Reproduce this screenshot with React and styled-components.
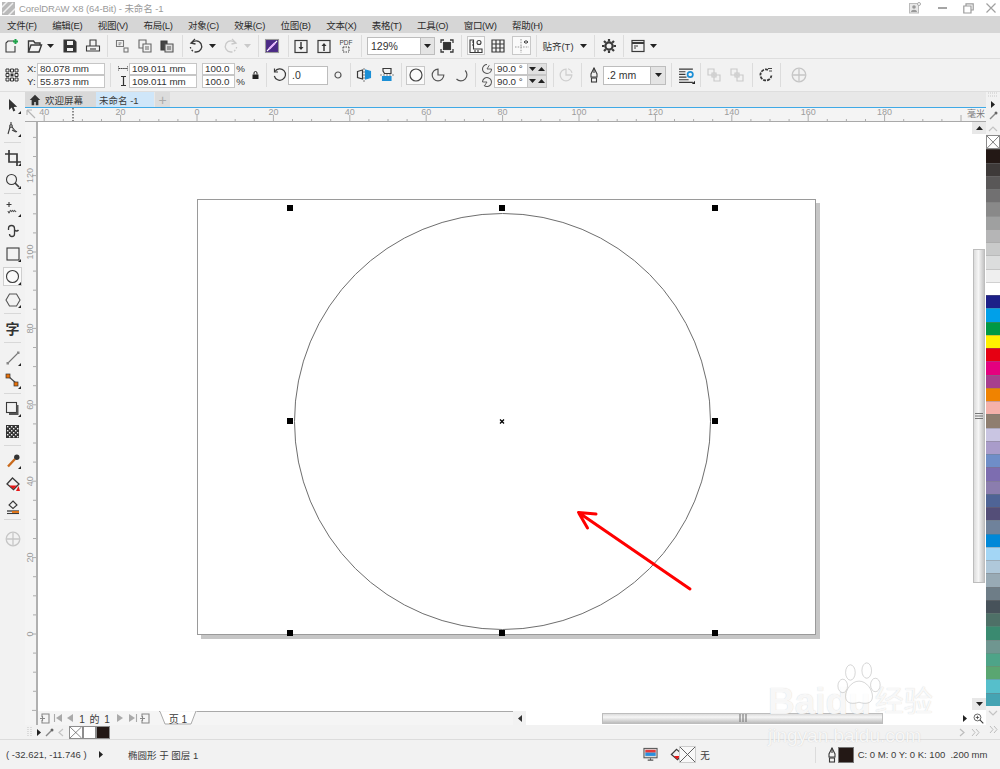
import React from 'react';
import styled, { createGlobalStyle } from 'styled-components';

const FONT = '"Liberation Sans", "Noto Sans CJK SC", sans-serif';
const Global = createGlobalStyle`
  html, body { margin: 0; padding: 0; background: #f2f2f2; }
  body { font-family: ${FONT}; color: #333; }
`;

const App_ = styled.div`position: relative; width: 1000px; height: 769px; overflow: hidden; display: flex; flex-direction: column; background: #f2f2f2;`;
const TitleBar = styled.div`height: 16px; background: #fff; display: flex; align-items: center; color: #9a9a9a; font-size: 9.5px; flex: none;`;
const TitleText = styled.span`margin-left: 4px; letter-spacing: -.1px;`;
const WindowButtons = styled.div`margin-left: auto; display: flex; align-items: center;`;
const MenuBar = styled.div`height: 17px; flex: none; background: #d6d6d6; display: flex; align-items: center; padding-left: 7px; gap: 15.5px; font-size: 9.5px; letter-spacing: -.3px; color: #2c2c2c;`;
const Bar = styled.div`flex: none; display: flex; align-items: center; background: #f2f2f2; height: ${p => p.$h}px; border-bottom: 1px solid #dedede; box-sizing: border-box;`;
const Slot = styled.span`flex: none; display: flex; align-items: center; justify-content: center; width: ${p => p.$w || 14}px; margin-left: ${p => p.$ml || 0}px;`;
const Sep = styled.span`flex: none; width: 1px; height: ${p => p.$h || 22}px; background: #dcdcdc; margin-left: ${p => p.$ml || 0}px;`;
const Toggle = styled(Slot)`height: 19px; background: #fafafa; border: 1px solid #c8c8c8; box-sizing: border-box;`;
const Combo = styled.span`flex: none; display: flex; height: ${p => p.$h}px; width: ${p => p.$w}px; margin-left: ${p => p.$ml || 0}px; box-sizing: border-box; border: 1px solid #bdbdbd; background: #fff; font-size: 10.5px; align-items: center; padding-left: 3px; color: #333;`;
const ComboCaret = styled.span`margin-left: auto; width: 13px; align-self: stretch; display: flex; align-items: center; justify-content: center; background: #e4e4e4; border-left: 1px solid #bdbdbd;`;
const SnapLabel = styled(Slot)`font-size: 9.5px; color: #333; white-space: nowrap;`;
const Fields = styled.div`flex: none; display: grid; grid-template-columns: ${p => p.$cols}; grid-auto-rows: 12.5px; margin-left: ${p => p.$ml || 0}px; font-size: 9.8px; align-items: center;`;
const FieldLabel = styled.span`color: #333; display: flex; align-items: center; justify-content: ${p => p.$center ? 'center' : 'flex-start'};`;
const Field = styled.span`box-sizing: border-box; height: 12.5px; border: 1px solid #c6c6c6; background: #fff; padding-left: 2px; display: flex; align-items: center; color: #333; white-space: nowrap; overflow: hidden;`;
const Spin = styled.span`height: 12.5px; box-sizing: border-box; background: #e0e0e0; border: 1px solid #c6c6c6; border-left: 0; display: flex; align-items: center; justify-content: space-around;`;

const Main = styled.div`flex: 1; display: flex; min-height: 0;`;
const Toolbox = styled.div`width: 25px; flex: none; display: flex; flex-direction: column; align-items: center; background: #f2f2f2;`;
const BoxTool = styled.span`flex: none; width: ${p => p.$on ? 19 : 25}px; height: ${p => p.$h || 23}px; margin-top: ${p => p.$mt || 0}px; display: flex; align-items: center; justify-content: center; position: relative; box-sizing: border-box; ${p => p.$on ? 'background:#fafafa; border:1px solid #cfcfcf;' : ''}`;
const BoxSep = styled.span`flex: none; width: 17px; height: 1px; background: #d8d8d8; margin-top: ${p => p.$mt || 0}px;`;
const GlyphText = styled.span`font-size: 14px; font-weight: 700; color: #333; line-height: 1;`;
const Workspace = styled.div`flex: 1; display: flex; flex-direction: column; min-width: 0;`;
const Tabs = styled.div`height: 16px; flex: none; box-sizing: border-box; display: flex; background: #e8e8e8; border-bottom: 1px solid #3fa9e6; font-size: 9.5px;`;
const Tab = styled.span`display: flex; align-items: center; gap: 4px; width: ${p => p.$w}px; box-sizing: border-box; padding-left: ${p => p.$pl}px; background: ${p => p.$bg}; color: #3a3a3a;`;
const TabAdd = styled(Tab)`justify-content: center; padding: 0; color: #a9a9a9; font-size: 14px; margin-left: 1px;`;
const RulerRow = styled.div`height: 14px; flex: none; box-sizing: border-box; display: flex; background: #f4f4f4; border-bottom: 1px solid #a9a9a9;`;
const Corner = styled.span`width: 13px; flex: none; display: flex; align-items: center; justify-content: center;`;
const Body = styled.div`flex: 1; display: flex; min-height: 0;`;
const VRuler = styled.svg`width: 13px; flex: none; display: block; box-sizing: border-box; background: #f4f4f4; border-right: 2px solid #b0b0b0;`;
const Inner = styled.div`flex: 1; display: flex; flex-direction: column; min-width: 0;`;
const CanvasRow = styled.div`flex: 1; display: flex; min-height: 0;`;
const Canvas = styled.div`position: relative; flex: 1; background: #fff; overflow: hidden;`;
const Page = styled.div`position: absolute; left: 159px; top: 77px; width: 619px; height: 436px; box-sizing: border-box; border: 1px solid #9a9a9a; background: #fff; box-shadow: 4px 4px 0 #c6c6c6;`;
const Drawing = styled.svg`position: absolute; left: 0; top: 0;`;
const VScroll = styled.div`width: 14px; flex: none; display: flex; flex-direction: column; background: #fff;`;
const ScrollBtn = styled.span`height: 12px; flex: none; background: #e8e8e8; display: flex; align-items: center; justify-content: center; margin-top: ${p => p.$mt || 0}px;`;
const ScrollBtnLeft = styled(ScrollBtn)`width: 13px; height: 14px; background: #f2f2f2;`;
const VThumb = styled.span`height: 334px; margin: 115px 1px 0; flex: none; box-sizing: border-box; border: 1px solid #bdbdbd; background: linear-gradient(90deg, #dcdcdc, #f6f6f6 45%, #c4c4c4); display: flex; align-items: center; justify-content: center;`;
const PageRow = styled.div`height: 14px; flex: none; display: flex; align-items: center; background: #f5f5f5; font-size: 10px; color: #3a3a3a;`;
const PageTab = styled.span`position: relative; flex: none; width: 38px; margin-left: 8px; height: 14px; display: flex; align-items: center; justify-content: center; padding-left: 0;`;
const PageTabLabel = styled.span`position: relative;`;
const TabShape = styled.svg`position: absolute; left: 0; top: 0;`;
const TabLine = styled.span`flex: 1; align-self: flex-start; height: 1px; background: #a9a9a9;`;
const PageCount = styled.span`width: 32px; flex: none; margin-left: 4px; text-align: center; letter-spacing: 1px; white-space: nowrap;`;
const HScroll = styled.div`width: 473px; flex: none; height: 14px; display: flex; align-items: center; background: #fff;`;
const HThumb = styled.span`width: 281px; height: 11px; margin-left: 76px; box-sizing: border-box; border: 1px solid #bdbdbd; background: linear-gradient(180deg, #dcdcdc, #f6f6f6 35%, #bdbdbd); display: flex; align-items: center; justify-content: center; flex: none;`;
const DocPalette = styled.div`height: 14px; flex: none; display: flex; align-items: center; background: #f2f2f2;`;
const DocSwatch = styled.span`width: 13.5px; height: 13px; box-sizing: border-box; flex: none; background: ${p => p.$c}; border: 1px solid #8d8d8d; margin-left: ${p => p.$ml || 0}px;`;
const PaletteCol = styled.div`width: 14px; flex: none; display: flex; flex-direction: column; align-items: stretch; background: #f2f2f2;`;
const PalTool = styled.span`height: ${p => p.$h}px; flex: none; display: flex; align-items: center; justify-content: center;`;
const Swatches = styled.div`height: 571px; flex: none; display: flex; flex-direction: column;`;
const Swatch = styled.span`flex: 1; background: ${p => p.$c}; border-top: 1px solid rgba(120,120,120,.35);`;
const NoColor = styled.span`flex: 1; border: 1px solid #8a8a8a; box-sizing: border-box; display: block; overflow: hidden; background: #fff;`;
const Status = styled.div`height: 30px; flex: none; box-sizing: border-box; border-top: 1px solid #dcdcdc; display: flex; align-items: center; background: #f2f2f2; font-size: 9.5px; color: #3a3a3a;`;
const StatusText = styled.span`flex: none; margin-left: ${p => p.$ml || 0}px; width: ${p => p.$w ? p.$w + 'px' : 'auto'}; white-space: nowrap;`;
const StatusSwatch = styled.span`flex: none; width: 16px; height: 16px; background: #231815; margin-left: ${p => p.$ml}px; border: 1px solid #777; box-sizing: border-box;`;
const XBox = styled.span`flex: none; width: 17px; height: 17px; margin-left: ${p => p.$ml}px; display: block; box-sizing: border-box; border: 1px solid #ccc; background: #f8f8f8;`;
const Watermark = styled.div`position: absolute; left: 768px; top: 682px; width: 232px; height: 80px; color: rgba(255,255,255,.85); text-shadow: 0 0 1px rgba(150,150,150,.45); pointer-events: none; display: flex; flex-direction: column;`;
const MarkTop = styled.div`display: flex; align-items: center; font-weight: 700; font-size: 37px; line-height: 40px; height: 40px; white-space: nowrap;`;
const MarkCn = styled.span`font-size: 29px; font-weight: 400; margin-left: 4px;`;
const MarkUrl = styled.div`font-size: 19px; line-height: 22px; margin-top: 3px; white-space: nowrap;`;
const MarkPaw = styled.svg`position: absolute; left: 67px; top: -22px; display: block;`;

const Svg = ({ s = 16, children, vb }) => (
  <svg width={s} height={s} viewBox={vb || '0 0 16 16'} fill="none" stroke="#3a3a3a" strokeWidth="1.1" style={{ display: 'block', flex: 'none' }}>{children}</svg>
);
const Caret = ({ up, c = '#222' }) => (
  <svg width="7" height="4" viewBox="0 0 7 4" style={{ display: 'block' }}><path d={up ? 'M0 4L3.5 0L7 4Z' : 'M0 0L7 0L3.5 4Z'} fill={c} /></svg>
);
const RCaret = ({ c = '#222' }) => (
  <svg width="4" height="7" viewBox="0 0 4 7" style={{ display: 'block' }}><path d="M0 0L4 3.5L0 7Z" fill={c} /></svg>
);
const LCaret = () => (
  <svg width="4" height="7" viewBox="0 0 4 7" style={{ display: 'block' }}><path d="M4 0L0 3.5L4 7Z" fill="#333" /></svg>
);
const Corn = () => <path d="M13 16h3v-3z" fill="#222" stroke="none" />;

const I = {
  newDoc: <Svg><path d="M10 3H4L2 5v9h9V8" /><path d="M11.5 1v5M9 3.5h5" stroke="#1fa34a" strokeWidth="2" /></Svg>,
  open: <Svg><path d="M1.5 14V3h5l1.5 2h5v2" fill="none" strokeWidth="1.4" /><path d="M1.5 14l2.5-7h10.5l-2.5 7z" fill="#f2f2f2" strokeWidth="1.4" /></Svg>,
  save: <Svg><path d="M2 2h10l2 2v10H2z" fill="#333" /><rect x="5" y="3" width="6" height="4" fill="#f2f2f2" stroke="none" /><rect x="5" y="10" width="6" height="3" fill="#f2f2f2" stroke="none" /></Svg>,
  print: <Svg><path d="M5 8V2h6v6" /><path d="M1.5 8h13v5h-13z" /><path d="M5 11h6" /></Svg>,
  cut: <Svg><path d="M2.5 2.5h7v6h-7z" stroke="#777" /><path d="M4.5 5h3M4.5 6.8h2" stroke="#777" /><rect x="10" y="10" width="4" height="4" stroke="#777" /></Svg>,
  copy: <Svg><path d="M2 2h7v8H2z" stroke="#666" /><path d="M6 6h8v8H6z" fill="#f2f2f2" stroke="#666" /><path d="M8 9h4M8 11h4" stroke="#666" /></Svg>,
  paste: <Svg><path d="M2 3h6v9H2z" fill="#444" /><path d="M6 6h8v8H6z" fill="#ddd" stroke="#555" /><path d="M8 9h4M8 11h4" stroke="#555" /></Svg>,
  undo: <Svg><path d="M3.5 5.2A5.6 5.6 0 1 1 8 14" strokeWidth="1.3" /><path d="M8 14A5.6 5.6 0 0 1 2.4 8.5" strokeDasharray="1.6 1.6" strokeWidth="1.3" /><path d="M7 1L3 5l4.5 1" strokeWidth="1.3" /></Svg>,
  redo: <Svg><g stroke="#c9c9c9"><path d="M12.5 5.2A5.6 5.6 0 1 0 8 14" strokeWidth="1.3" /><path d="M8 14a5.6 5.6 0 0 0 5.6-5.5" strokeDasharray="1.6 1.6" strokeWidth="1.3" /><path d="M9 1l4 4-4.5 1" strokeWidth="1.3" /></g></Svg>,
  corel: <Svg><rect x="1.5" y="1.5" width="13" height="13" fill="#4b2a86" stroke="#9a9a9a" /><path d="M3 13L13 3" stroke="#fff" /><path d="M5 11l6-6" stroke="#e8b7ff" strokeWidth="2" /></Svg>,
  imp: <Svg><rect x="2" y="2.5" width="12" height="12" strokeWidth="1.2" /><path d="M8 4v7" strokeWidth="1.5" /><path d="M5.5 9L8 12l2.5-3z" fill="#333" stroke="none" /></Svg>,
  exp: <Svg><rect x="2" y="2.5" width="12" height="12" strokeWidth="1.2" /><path d="M8 13V6" strokeWidth="1.5" /><path d="M5.5 8L8 5l2.5 3z" fill="#333" stroke="none" /></Svg>,
  full: <Svg><path d="M2 5V2h3M11 2h3v3M14 11v3h-3M5 14H2v-3" strokeWidth="1.3" /><rect x="4.5" y="4.5" width="7" height="7" fill="#333" /></Svg>,
  rulers: <Svg s={16}><path d="M2 2h3.5v9H14v3.5H2z" /><path d="M4 4h1M4 7h1M7 12v2M10 12v2" /><circle cx="11" cy="4.5" r="2" /></Svg>,
  grid: <Svg><path d="M2 2h12v12H2zM2 6h12M2 10h12M6 2v12M10 2v12" strokeWidth="1.2" /></Svg>,
  guides: <Svg><path d="M7 1v14M1 9h14" stroke="#9a9a9a" strokeDasharray="1.5 1.2" /><path d="M10 4c1-1.500 3-1.500 4 0-1 1.500-3 1.500-4 0z" strokeWidth="1" /></Svg>,
  gear: <Svg><circle cx="8" cy="8" r="3.6" strokeWidth="2.2" /><path d="M8 1v2.500M8 12.500V15M1 8h2.500M12.500 8H15M3 3l1.800 1.800M11.200 11.200L13 13M13 3l-1.800 1.800M4.800 11.200L3 13" strokeWidth="2.200" /></Svg>,
  win: <Svg><rect x="2" y="2.500" width="12" height="11" strokeWidth="1.2" /><path d="M2 5h12" strokeWidth="2" /><path d="M4 8h4M4 10h2" /></Svg>,
  pos: <Svg s={14} vb="0 0 14 14"><g fill="none" stroke="#333" strokeWidth="1"><path d="M1 1h3v3H1zM5.500 1h3v3h-3zM10 1h3v3h-3zM1 5.500h3v3H1zM10 5.500h3v3h-3zM1 10h3v3H1zM5.500 10h3v3h-3zM10 10h3v3h-3z" /></g><rect x="5.500" y="5.500" width="3" height="3" fill="#333" stroke="none" /></Svg>,
  lock: <svg width="7" height="8" viewBox="0 0 7 8" style={{ display: 'block' }}><rect x="0.500" y="3.500" width="6" height="4.500" fill="#222" /><path d="M2 3.500V2a1.500 1.500 0 0 1 3 0v1.500" stroke="#222" fill="none" /></svg>,
  rotate: <Svg><path d="M3 4.500A5.700 5.700 0 1 1 2.300 9" strokeWidth="1.200" /><path d="M2.500 1.500v3.500h3.500" strokeWidth="1.200" /></Svg>,
  degree: <svg width="8" height="8" viewBox="0 0 8 8" style={{ display: 'block' }}><circle cx="4" cy="4" r="3" fill="none" stroke="#555" strokeWidth="1.200" /></svg>,
  mirH: <Svg><path d="M8 1v14" stroke="#888" strokeDasharray="2 1" /><path d="M1.500 4.500L6.500 3v9l-5-1.500z" strokeWidth="1.200" /><path d="M9.500 3l5 1.500v6l-5 1.500z" fill="#1b8fd6" stroke="#1b8fd6" /></Svg>,
  mirV: <Svg><path d="M1 8h14" stroke="#888" strokeDasharray="2 1" /><path d="M4 1.500h8v5H5.500L4 4z" strokeWidth="1.200" /><path d="M3.500 9.500h8.500v4H3.500z" fill="#1b8fd6" stroke="#1b8fd6" /></Svg>,
  ellipse: <Svg><circle cx="8" cy="8" r="6" stroke="#444" strokeWidth="1.200" /></Svg>,
  pie: <Svg><path d="M8 2.200A5.800 5.800 0 1 0 13.800 8H8z" stroke="#555" strokeWidth="1.200" /></Svg>,
  arc: <Svg><path d="M12.200 3.500A5.800 5.800 0 1 1 3.500 12" stroke="#555" strokeWidth="1.200" /></Svg>,
  angA: <Svg s={12} vb="0 0 16 16"><path d="M14 8A6 6 0 1 1 8 2" strokeWidth="1.400" stroke="#555" /><path d="M8 8h6M8 8l3-5" strokeWidth="1.200" stroke="#555" /></Svg>,
  angB: <Svg s={12} vb="0 0 16 16"><path d="M2 8a6 6 0 1 1 2 4.500" strokeWidth="1.400" stroke="#555" /><path d="M8 8H2M8 8l-3 4.500" strokeWidth="1.200" stroke="#555" /></Svg>,
  clock: <Svg><path d="M8 2.200A5.800 5.800 0 1 0 13.800 8H8z" stroke="#cfcfcf" strokeWidth="1.300" /><path d="M10 1.800A5.500 5.500 0 0 1 14 6" stroke="#cfcfcf" /></Svg>,
  pen: <Svg><path d="M8 1L5 7v3h6V7z" strokeWidth="1.100" /><path d="M8 1v5" /><rect x="5.500" y="11" width="5" height="4" strokeWidth="1.100" /></Svg>,
  list: <Svg s={17}><path d="M1 2h13M1 4.500h6M1 7h6M1 9.500h7M1 12h9M1 14.500h13" strokeWidth="1.100" /><circle cx="11.500" cy="7" r="2.500" stroke="#1b8fd6" strokeWidth="1.600" /><Corn /></Svg>,
  mirA: <Svg><path d="M2 2h6v6H2z" stroke="#c9c9c9" /><path d="M8 8h6v6H8z" stroke="#c9c9c9" /><path d="M6 6h4v4H6z" stroke="#c9c9c9" /></Svg>,
  cycle: <Svg><path d="M10 2.800A5.500 5.500 0 1 0 13.400 8.500" strokeWidth="1.800" strokeDasharray="3 1" /><path d="M10 1.500h4M11 4h3" stroke="#444" /></Svg>,
  plus: <Svg><circle cx="8" cy="8" r="6.800" stroke="#c6c6c6" strokeWidth="1.300" /><path d="M8 2v12M2 8h12" stroke="#c6c6c6" strokeWidth="1.300" /></Svg>,
  arrow: <Svg><path d="M4 1l0 11 2.800-2.500 1.500 4 2-.9-1.600-3.700 3.500-.2z" fill="#333" stroke="none" /><Corn /></Svg>,
  shape: <Svg><path d="M6 1v3" /><circle cx="6" cy="5" r="1.300" /><path d="M5 6L3 13M7 6c2 3 3 4 5 5" strokeWidth="1.100" /><path d="M7 9l4 2" /><Corn /></Svg>,
  crop: <Svg><path d="M4 0v12h12M0 4h12v12" strokeWidth="1.700" /><Corn /></Svg>,
  zoom: <Svg><circle cx="6.500" cy="6.500" r="5" strokeWidth="1.100" /><path d="M10 10l4 4" strokeWidth="1.700" /><Corn /></Svg>,
  free: <Svg><path d="M4 1v5M1.500 3.500h5" /><path d="M3 10c1 3 1 3 2 0s1 3 2 0 1 3 2 0 1 3 2 0" strokeWidth="1" /><Corn /></Svg>,
  curve: <Svg><path d="M3.500 7V5.500a3 3 0 0 1 6 0v5.500a2.500 2.500 0 0 1-5 0" strokeWidth="1.300" /><path d="M9.500 7a2.500 2.500 0 0 0 4 0" strokeWidth="1.300" /></Svg>,
  rect: <Svg><rect x="2" y="2" width="12" height="12" strokeWidth="1.100" /><Corn /></Svg>,
  oval: <Svg><circle cx="7.500" cy="7.500" r="6" strokeWidth="1.100" /><Corn /></Svg>,
  poly: <Svg><path d="M4.500 2h7L15 8l-3.500 6h-7L1 8z" strokeWidth="1.100" stroke="#555" /><Corn /></Svg>,
  line: <Svg><path d="M3 13L13 3" stroke="#777" /><rect x="1.500" y="12" width="2.500" height="2.500" fill="#888" stroke="none" /><rect x="12" y="1.500" width="2.500" height="2.500" fill="#888" stroke="none" /><Corn /></Svg>,
  conn: <Svg><path d="M3 3l9 8" stroke="#444" /><rect x="1" y="1" width="4" height="4" fill="#e8710a" stroke="#333" strokeWidth=".7" /><rect x="9" y="9" width="4" height="4" fill="#e8710a" stroke="#333" strokeWidth=".7" /><Corn /></Svg>,
  shadow: <Svg><rect x="1.500" y="1.500" width="10" height="10" strokeWidth="1.100" /><path d="M12.500 4v9H4" strokeWidth="2" stroke="#555" /><Corn /></Svg>,
  eye: <Svg><path d="M3 13.500L10 6" strokeWidth="2.400" stroke="#c96a1c" /><circle cx="11.800" cy="4.200" r="2.700" fill="#333" stroke="none" /><Corn /></Svg>,
  fill: <Svg><path d="M7.500 2L14 8l-5.500 5.500L2 8z" strokeWidth="1.300" /><path d="M4 9.500h8L8.500 13z" fill="#e81818" stroke="none" /><path d="M11 15l2.500-5 1.500 5z" fill="#e81818" stroke="none" /></Svg>,
  outline: <Svg><path d="M8 2l4 4-4 3.500L4 6z" strokeWidth="1.100" /><path d="M2 12h12" strokeWidth="1.300" /><path d="M7 13h7" stroke="#e8710a" strokeWidth="1.800" /><path d="M2 14.500h12" strokeWidth="1.100" /></Svg>,
  home: <Svg s={12} vb="0 0 16 16"><path d="M8 1L1 8h2.500v7h3.500v-4.500h2V15h3.500V8H15z" fill="#333" stroke="none" /></Svg>,
  first: <Svg s={10} vb="0 0 10 10"><path d="M1.500 1v8" stroke="#aaa" /><path d="M9 1v8L3 5z" fill="#aaa" stroke="none" /></Svg>,
  prev: <Svg s={10} vb="0 0 10 10"><path d="M8 1v8L2 5z" fill="#aaa" stroke="none" /></Svg>,
  next: <Svg s={10} vb="0 0 10 10"><path d="M2 1v8l6-4z" fill="#aaa" stroke="none" /></Svg>,
  last: <Svg s={10} vb="0 0 10 10"><path d="M8.500 1v8" stroke="#aaa" /><path d="M1 1v8l6-4z" fill="#aaa" stroke="none" /></Svg>,
  addPage: <Svg s={11} vb="0 0 11 11"><path d="M2 4V1h7v9H2V7" stroke="#888" /><path d="M0 5.500h5M2.500 3v5" stroke="#888" /></Svg>,
  dropper: <Svg s={9} vb="0 0 9 9"><path d="M1 8l5-5" stroke="#888" strokeWidth="1.500" /><circle cx="7" cy="2" r="1.500" fill="#666" stroke="none" /></Svg>,
  chevL: <Svg s={9} vb="0 0 9 9"><path d="M6 1L2 4.500 6 8" stroke="#c4c4c4" strokeWidth="1.200" /></Svg>,
  chevR: <Svg s={9} vb="0 0 9 9"><path d="M3 1l4 3.500L3 8" stroke="#bdbdbd" strokeWidth="1.200" /></Svg>,
  chev2: <Svg s={9} vb="0 0 9 9"><path d="M1 1l3 3.500L1 8M5 1l3 3.500L5 8" stroke="#bdbdbd" strokeWidth="1" /></Svg>,
  chevU: <Svg s={10} vb="0 0 10 10"><path d="M1 7l4-4 4 4" stroke="#c4c4c4" strokeWidth="1.200" /></Svg>,
  chevD: <Svg s={10} vb="0 0 10 10"><path d="M1 3l4 4 4-4" stroke="#c4c4c4" strokeWidth="1.200" /></Svg>,
  grip: <Svg s={10} vb="0 0 10 10"><path d="M0 2h10M0 5h10" stroke="#c8c8c8" strokeDasharray="1 1" /></Svg>,
  gripV: <Svg s={8} vb="0 0 8 8"><path d="M1 0v8M4 0v8M7 0v8" stroke="#777" /></Svg>,
  gripH: <Svg s={8} vb="0 0 8 8"><path d="M0 1.500h8M0 4h8M0 6.500h8" stroke="#777" /></Svg>,
  gripS: <Svg s={10} vb="0 0 10 10"><path d="M2 0v10M5 0v10" stroke="#c8c8c8" strokeDasharray="1 1" /></Svg>,
  cornerTool: <Svg s={11} vb="0 0 11 11"><path d="M1 1h5M1 1v5M1 1l8 8" stroke="#b5b5b5" /></Svg>,
  x: <svg width="100%" height="100%" viewBox="0 0 16 16" preserveAspectRatio="none" style={{ display: 'block' }}><path d="M0 0L16 16M16 0L0 16" stroke="#555" fill="none" /></svg>,
  monitor: <Svg s={15} vb="0 0 16 16"><rect x="1" y="1.500" width="14" height="10" fill="#ddd" stroke="#555" /><rect x="2.500" y="3" width="11" height="3" fill="#e63a3a" stroke="none" /><rect x="2.500" y="6" width="11" height="3.500" fill="#2a8fdc" stroke="none" /><path d="M5 14h6M8 12v2" stroke="#555" /></Svg>,
  fillS: <Svg s={15} vb="0 0 16 16"><path d="M7 2.500L13.500 8 8 13.500 1.500 8z" strokeWidth="1.300" /><path d="M4 9.500h7L7.500 13z" fill="#e81818" stroke="none" /><path d="M11 15l2.500-5 1.500 5z" fill="#e81818" stroke="none" /></Svg>,
  title: <svg width="13" height="13" viewBox="0 0 13 13" style={{ display: 'block' }}><rect width="13" height="13" fill="#b9b9b9" /><path d="M-1 6L6-1M1 11L11 1M6 14L14 6" stroke="#eee" strokeWidth="1.500" /></svg>,
  user: <svg width="12" height="12" viewBox="0 0 12 12" style={{ display: 'block' }}><rect x=".5" y="1.500" width="9" height="9.500" fill="#e8e8e8" stroke="#bbb" /><circle cx="5" cy="5" r="1.800" fill="#999" /><path d="M2 10c0-3 6-3 6 0" fill="#999" /><circle cx="10" cy="2" r="1.500" fill="#fff" stroke="#aaa" /></svg>,
  min: <svg width="9" height="3" viewBox="0 0 9 3" style={{ display: 'block' }}><rect width="9" height="2" fill="#a5a5a5" /></svg>,
  rest: <svg width="11" height="11" viewBox="0 0 11 11" style={{ display: 'block' }}><path d="M3 3V.8h7.200V7H8M.8 3h7.200v7H.8z" fill="none" stroke="#9c9c9c" strokeWidth="1.200" /></svg>,
  close: <svg width="10" height="10" viewBox="0 0 10 10" style={{ display: 'block' }}><path d="M.5.5l9 9M9.500.5l-9 9" stroke="#a0a0a0" strokeWidth="1.200" /></svg>,
};

const PX = 3.82;
const RulerTop = () => {
  const x0 = 197 - 38;
  const ticks = [];
  for (let mm = -40; mm <= 205; mm += 5) {
    const x = x0 + mm * PX;
    const major = mm % 20 === 0;
    ticks.push(<line key={mm} x1={x} x2={x} y1={major ? 7 : 11} y2="13" stroke="#9a9a9a" strokeWidth=".8" />);
    if (major && mm <= 180) ticks.push(<text key={'t' + mm} x={x} y="7" fontSize="9" fill="#9c9c9c" textAnchor="middle" fontFamily={FONT}>{Math.abs(mm)}</text>);
  }
  return (
    <svg width="948" height="13" viewBox="0 0 948 13" style={{ display: 'block', flex: 'none' }}>
      {ticks}
      <line x1="35" x2="35" y1="0" y2="13" stroke="#222" strokeDasharray="1.500 1.500" />
      <rect x="926" y="0" width="22" height="13" fill="#f4f4f4" />
      <text x="929" y="9" fontSize="9" fill="#777" fontFamily={FONT}>毫米</text>
    </svg>
  );
};
const RulerLeft = () => {
  const ticks = [];
  for (let mm = -20; mm <= 130; mm += 5) {
    const y = 634 - 122 - mm * PX;
    const major = mm % 20 === 0;
    ticks.push(<line key={mm} y1={y} y2={y} x1={major ? 7 : 8} x2="11" stroke="#9a9a9a" strokeWidth=".8" />);
    if (major && mm >= 0 && mm <= 120) ticks.push(<text key={'t' + mm} transform={`translate(8 ${y}) rotate(-90)`} fontSize="9" fill="#9c9c9c" textAnchor="middle" fontFamily={FONT}>{mm}</text>);
  }
  return <VRuler height="603" viewBox="0 0 11 603">{ticks}</VRuler>;
};

const HANDLES = [[290, 208], [502, 208], [715, 208], [290, 421], [715, 421], [290, 633], [502, 633], [715, 633]];
const COLORS = ['#231815', '#3e3a39', '#595757', '#717071', '#898989', '#9fa0a0', '#b5b5b6', '#c9caca', '#dcdddd', '#efefef', '#ffffff', '#1d2088', '#00a0e9', '#009944', '#fff100', '#e60012', '#e4007f', '#a73f8e', '#f08300', '#f5b1aa', '#8f7e6f', '#c9c5e2', '#a99cca', '#6f8ec8', '#7d6db0', '#8b7dae', '#4f6496', '#544e78', '#6f829b', '#0088d8', '#a3d6f5', '#afc8da', '#98aab5', '#6e7d87', '#47525a', '#4e7067', '#3a8a70', '#6f9690', '#4ea488', '#5aa671', '#56bfcb', '#45a4b3'];
const MENUS = ['文件(F)', '编辑(E)', '视图(V)', '布局(L)', '对象(C)', '效果(C)', '位图(B)', '文本(X)', '表格(T)', '工具(O)', '窗口(W)', '帮助(H)'];

export default function App() {
  return (
    <App_>
      <Global />
      <TitleBar>
        <Slot $w={13} $ml={2}>{I.title}</Slot>
        <TitleText>CorelDRAW X8 (64-Bit) - 未命名 -1</TitleText>
        <WindowButtons>
          <Slot $w={12}>{I.user}</Slot>
          <Slot $w={9} $ml={17}>{I.min}</Slot>
          <Slot $w={11} $ml={16}>{I.rest}</Slot>
          <Slot $w={10} $ml={12} style={{ marginRight: 4 }}>{I.close}</Slot>
        </WindowButtons>
      </TitleBar>
      <MenuBar>{MENUS.map(m => <span key={m}>{m}</span>)}</MenuBar>

      <Bar $h={26}>
        <Slot $ml={4} $w={16}>{I.newDoc}</Slot>
        <Slot $ml={7} $w={16}>{I.open}</Slot>
        <Slot $ml={3} $w={8}><Caret /></Slot>
        <Slot $ml={9}>{I.save}</Slot>
        <Slot $ml={9}>{I.print}</Slot>
        <Sep $ml={7} />
        <Slot $ml={7}>{I.cut}</Slot>
        <Slot $ml={9}>{I.copy}</Slot>
        <Slot $ml={8}>{I.paste}</Slot>
        <Sep $ml={8} />
        <Slot $ml={6}>{I.undo}</Slot>
        <Slot $ml={5} $w={8}><Caret /></Slot>
        <Slot $ml={8}>{I.redo}</Slot>
        <Slot $ml={5} $w={8}><Caret c="#c9c9c9" /></Slot>
        <Sep $ml={7} />
        <Slot $ml={6}>{I.corel}</Slot>
        <Sep $ml={9} />
        <Slot $ml={5}>{I.imp}</Slot>
        <Slot $ml={9}>{I.exp}</Slot>
        <Slot $ml={8}>
          <svg width="14" height="16" viewBox="0 0 14 16" style={{ display: 'block' }}>
            <text x="7" y="6.500" fontSize="6.500" textAnchor="middle" fill="#444" fontFamily={FONT}>PDF</text>
            <path d="M4 9v5M10 9v5M4 9h6M4 14h6" stroke="#444" fill="none" strokeDasharray="1.500 1" />
          </svg>
        </Slot>
        <Sep $ml={8} />
        <Combo $w={68} $h={18} $ml={5}>129%<ComboCaret><Caret /></ComboCaret></Combo>
        <Slot $ml={5}>{I.full}</Slot>
        <Sep $ml={7} />
        <Toggle $ml={5} $w={18}>{I.rulers}</Toggle>
        <Slot $ml={6}>{I.grid}</Slot>
        <Toggle $ml={7} $w={19}>{I.guides}</Toggle>
        <Sep $ml={5} />
        <SnapLabel $ml={6} $w={30}>贴齐(T)</SnapLabel>
        <Slot $ml={6} $w={8}><Caret /></Slot>
        <Sep $ml={7} />
        <Slot $ml={7}>{I.gear}</Slot>
        <Sep $ml={7} />
        <Slot $ml={7}>{I.win}</Slot>
        <Slot $ml={4} $w={8}><Caret /></Slot>
      </Bar>

      <Bar $h={33}>
        <Slot $ml={5}>{I.pos}</Slot>
        <Fields $ml={8} $cols="10px 68px">
          <FieldLabel>X:</FieldLabel><Field>80.078 mm</Field>
          <FieldLabel>Y:</FieldLabel><Field>55.873 mm</Field>
        </Fields>
        <Sep $ml={5} $h={24} />
        <Fields $ml={6} $cols="12px 68px">
          <FieldLabel $center>
            <svg width="10" height="5" viewBox="0 0 10 5" style={{ display: 'block' }}><path d="M0 0v5M10 0v5M1 2.500h8" stroke="#333" strokeWidth="1.200" strokeDasharray="1.500 .6" /></svg>
          </FieldLabel><Field>109.011 mm</Field>
          <FieldLabel $center>
            <svg width="5" height="10" viewBox="0 0 5 10" style={{ display: 'block' }}><path d="M0 .5h5M0 9.500h5M2.500 1v8" stroke="#333" strokeWidth="1.200" /></svg>
          </FieldLabel><Field>109.011 mm</Field>
        </Fields>
        <Fields $ml={5} $cols="33px 11px">
          <Field>100.0</Field><FieldLabel $center>%</FieldLabel>
          <Field>100.0</Field><FieldLabel $center>%</FieldLabel>
        </Fields>
        <Slot $ml={6} $w={7}>{I.lock}</Slot>
        <Sep $ml={7} $h={24} />
        <Slot $ml={6}>{I.rotate}</Slot>
        <Combo $w={40} $h={19} $ml={1}>.0</Combo>
        <Slot $ml={6} $w={8}>{I.degree}</Slot>
        <Sep $ml={8} $h={24} />
        <Slot $ml={6}>{I.mirH}</Slot>
        <Slot $ml={9}>{I.mirV}</Slot>
        <Sep $ml={7} $h={24} />
        <Toggle $ml={4} $w={19}>{I.ellipse}</Toggle>
        <Slot $ml={6}>{I.pie}</Slot>
        <Slot $ml={9}>{I.arc}</Slot>
        <Sep $ml={7} $h={24} />
        <Slot $ml={5} $w={12} style={{ flexDirection: 'column', gap: 1 }}>{I.angA}{I.angB}</Slot>
        <Fields $ml={1} $cols="34px 19px">
          <Field>90.0 °</Field><Spin><Caret /><Caret up /></Spin>
          <Field>90.0 °</Field><Spin><Caret /><Caret up /></Spin>
        </Fields>
        <Sep $ml={6} $h={24} />
        <Slot $ml={5}>{I.clock}</Slot>
        <Sep $ml={8} $h={24} />
        <Slot $ml={7} $w={10}>{I.pen}</Slot>
        <Combo $w={63} $h={19} $ml={4}>.2 mm<ComboCaret style={{ width: 14 }}><Caret /></ComboCaret></Combo>
        <Sep $ml={5} $h={24} />
        <Slot $ml={6} $w={16}>{I.list}</Slot>
        <Sep $ml={6} $h={24} />
        <Slot $ml={6}>{I.mirA}</Slot>
        <Slot $ml={9}>{I.mirA}</Slot>
        <Sep $ml={8} $h={24} />
        <Slot $ml={6}>{I.cycle}</Slot>
        <Sep $ml={7} $h={24} />
        <Slot $ml={10} $w={16}>{I.plus}</Slot>
      </Bar>

      <Main>
        <Toolbox>
          <BoxTool $mt={2}>{I.arrow}</BoxTool>
          <BoxTool>{I.shape}</BoxTool>
          <BoxSep $mt={2} />
          <BoxTool $mt={3}>{I.crop}</BoxTool>
          <BoxTool>{I.zoom}</BoxTool>
          <BoxSep $mt={1} />
          <BoxTool $mt={3}>{I.free}</BoxTool>
          <BoxTool $h={22}>{I.curve}</BoxTool>
          <BoxTool>{I.rect}</BoxTool>
          <BoxTool $on $h={19} $mt={2}>{I.oval}</BoxTool>
          <BoxTool $mt={2}>{I.poly}</BoxTool>
          <BoxSep $mt={2} />
          <BoxTool $mt={3}><GlyphText>字</GlyphText></BoxTool>
          <BoxSep $mt={2} />
          <BoxTool $mt={3}>{I.line}</BoxTool>
          <BoxTool>{I.conn}</BoxTool>
          <BoxSep $mt={1} />
          <BoxTool $mt={3}>{I.shadow}</BoxTool>
          <BoxTool>
            <svg width="13" height="13" viewBox="0 0 13 13" style={{ display: 'block' }}>
              <rect width="13" height="13" fill="#333" />
              {Array.from({ length: 36 }, (_, i) => (i % 6 + Math.floor(i / 6)) % 2 === 0 ? <rect key={i} x={1 + (i % 6) * 2} y={1 + Math.floor(i / 6) * 2} width="1.400" height="1.400" fill="#eee" /> : null)}
            </svg>
          </BoxTool>
          <BoxSep $mt={2} />
          <BoxTool $mt={3}>{I.eye}</BoxTool>
          <BoxTool>{I.fill}</BoxTool>
          <BoxTool>{I.outline}</BoxTool>
          <BoxSep $mt={1} />
          <BoxTool $mt={7}>{I.plus}</BoxTool>
        </Toolbox>

        <Workspace>
          <Tabs>
            <Tab $w={71} $pl={4} $bg="#d9d9d9">{I.home}欢迎屏幕</Tab>
            <Tab $w={58} $pl={3} $bg="#cfe6f9">未命名 -1</Tab>
            <TabAdd $w={15} $pl={0} $bg="#dcdcdc">+</TabAdd>
          </Tabs>
          <RulerRow>
            <Corner>{I.cornerTool}</Corner>
            <RulerTop />
          </RulerRow>
          <Body>
            <RulerLeft />
            <Inner>
              <CanvasRow>
                <Canvas>
                  <Page />
                  <Drawing width="934" height="589" viewBox="38 122 934 589" fill="none">
                    <circle cx="502.500" cy="421.500" r="208" stroke="#6e6e6e" strokeWidth="1" />
                    {HANDLES.map(([x, y]) => <rect key={x + '-' + y} x={x - 3} y={y - 3} width="6" height="6" fill="#000" />)}
                    <path d="M500 419.500l4 4M504 419.500l-4 4" stroke="#000" strokeWidth="1.300" />
                    <path d="M690 589L580 513.500M578.500 512.500L596 514M578.500 512.500L587.500 528" stroke="#ff0000" strokeWidth="3" strokeLinecap="round" />
                  </Drawing>
                </Canvas>
                <VScroll>
                  <ScrollBtn><Caret up /></ScrollBtn>
                  <VThumb>{I.gripH}</VThumb>
                  <ScrollBtn $mt={115}><Caret /></ScrollBtn>
                </VScroll>
              </CanvasRow>
              <PageRow>
                <Slot $ml={1} $w={12}>{I.addPage}</Slot>
                <Slot $ml={1} $w={11}>{I.first}</Slot>
                <Slot $ml={1} $w={11}>{I.prev}</Slot>
                <PageCount>1 的 1</PageCount>
                <Slot $ml={3} $w={11}>{I.next}</Slot>
                <Slot $ml={2} $w={11}>{I.last}</Slot>
                <Slot $ml={1} $w={12}>{I.addPage}</Slot>
                <PageTab>
                  <TabShape width="38" height="14" viewBox="0 0 38 14">
                    <path d="M0 .5H1l5 12.500h26l5-13h1" fill="#fff" stroke="#a9a9a9" />
                  </TabShape>
                  <PageTabLabel>页 1</PageTabLabel>
                </PageTab>
                <TabLine />
                <HScroll>
                  <ScrollBtnLeft><LCaret /></ScrollBtnLeft>
                  <HThumb>{I.gripV}</HThumb>
                  <Slot $ml={76} $w={12}><RCaret /></Slot>
                  <Slot $w={14}>
                    <Svg s={11} vb="0 0 16 16"><circle cx="6.500" cy="6.500" r="5" /><path d="M10 10l5 5" strokeWidth="1.600" /><path d="M4 6.500h5M6.500 4v5" /></Svg>
                  </Slot>
                </HScroll>
              </PageRow>
            </Inner>
          </Body>
          <DocPalette>
            <Slot $w={10} $ml={1}>{I.gripS}</Slot>
            <Slot $w={6}><RCaret /></Slot>
            <Slot $w={9} $ml={3}>{I.dropper}</Slot>
            <Slot $w={9} $ml={3}>{I.chevL}</Slot>
            <DocSwatch $c="#fff" $ml={3}>{I.x}</DocSwatch>
            <DocSwatch $c="#fff" />
            <DocSwatch $c="#231815" />
            <Slot $w={9} $ml={847}>{I.chevR}</Slot>
            <Slot $w={9} $ml={5}>{I.chev2}</Slot>
          </DocPalette>
        </Workspace>

        <PaletteCol>
          <PalTool $h={7}>{I.grip}</PalTool>
          <PalTool $h={10}><RCaret /></PalTool>
          <PalTool $h={13}>{I.dropper}</PalTool>
          <PalTool $h={13}>{I.chevU}</PalTool>
          <Swatches>
            <NoColor>{I.x}</NoColor>
            {COLORS.map((c, i) => <Swatch key={i} $c={c} />)}
          </Swatches>
          <PalTool $h={14}>{I.chevD}</PalTool>
          <PalTool $h={18}>{I.chev2}</PalTool>
        </PaletteCol>
      </Main>

      <Status>
        <StatusText $ml={6} $w={88}>( -32.621, -11.746 )</StatusText>
        <Slot $w={5} $ml={4}><RCaret /></Slot>
        <StatusText $ml={25}>椭圆形 于 图层 1</StatusText>
        <Slot $w={15} $ml={445}>{I.monitor}</Slot>
        <Slot $w={15} $ml={12}>{I.fillS}</Slot>
        <XBox $ml={-6}>{I.x}</XBox>
        <StatusText $ml={4}>无</StatusText>
        <Sep $ml={105} $h={16} />
        <Slot $w={10} $ml={11}>{I.pen}</Slot>
        <StatusSwatch $ml={1} />
        <StatusText $ml={4}>C: 0 M: 0 Y: 0 K: 100&nbsp; .200 mm</StatusText>
      </Status>

      <Watermark>
        <MarkTop>Baidu<MarkCn>经验</MarkCn></MarkTop>
        <MarkUrl>jingyan.baidu.com</MarkUrl>
        <MarkPaw width="50" height="48" viewBox="0 0 46 50">
          <g fill="rgba(255,255,255,.7)" stroke="rgba(140,140,140,.45)" strokeWidth=".8">
            <ellipse cx="13" cy="13" rx="5" ry="8" />
            <ellipse cx="30" cy="11" rx="5" ry="8" />
            <ellipse cx="5" cy="27" rx="5" ry="7" />
            <ellipse cx="39" cy="26" rx="5" ry="7" />
            <path d="M22 22c-8 0-14 9-14 16 0 8 8 8 14 6 6 2 14 2 14-6 0-7-6-16-14-16z" />
          </g>
        </MarkPaw>
      </Watermark>
    </App_>
  );
}
